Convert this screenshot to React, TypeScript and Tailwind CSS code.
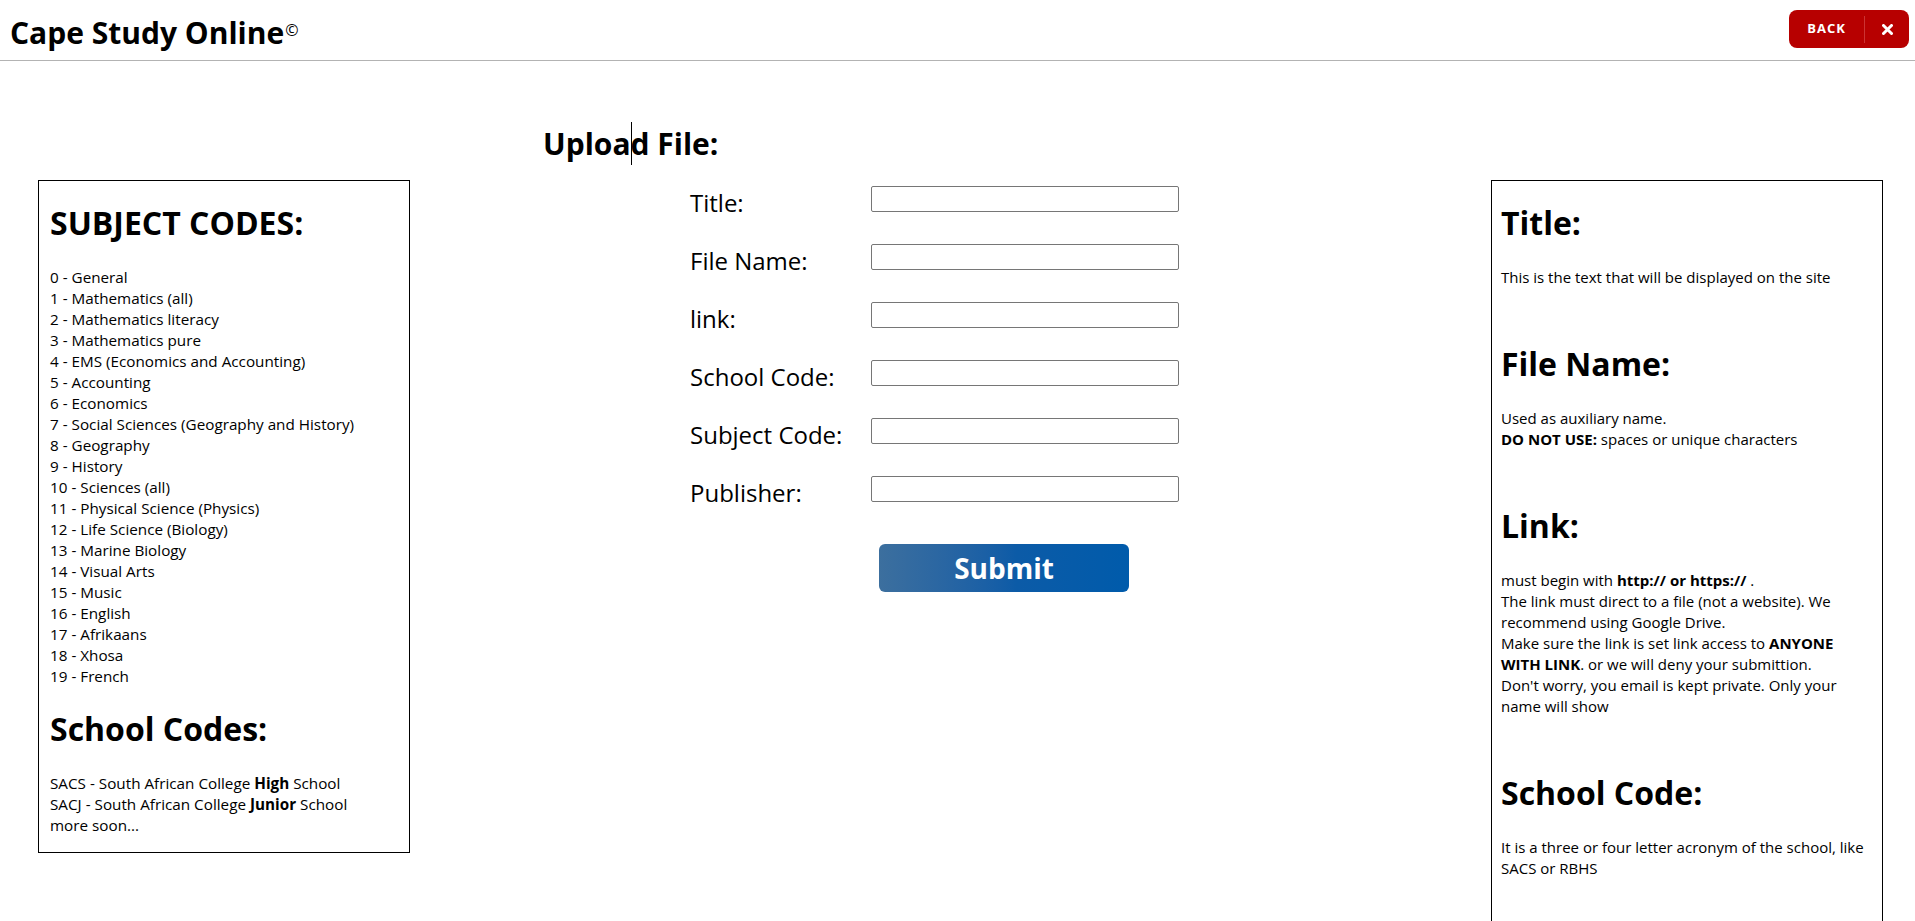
import React from "react";

const subjects = [
  "0 - General",
  "1 - Mathematics (all)",
  "2 - Mathematics literacy",
  "3 - Mathematics pure",
  "4 - EMS (Economics and Accounting)",
  "5 - Accounting",
  "6 - Economics",
  "7 - Social Sciences (Geography and History)",
  "8 - Geography",
  "9 - History",
  "10 - Sciences (all)",
  "11 - Physical Science (Physics)",
  "12 - Life Science (Biology)",
  "13 - Marine Biology",
  "14 - Visual Arts",
  "15 - Music",
  "16 - English",
  "17 - Afrikaans",
  "18 - Xhosa",
  "19 - French",
];

const fields = ["Title:", "File Name:", "link:", "School Code:", "Subject Code:", "Publisher:"];

function Heading({ children, first }: { children: React.ReactNode; first?: boolean }) {
  return (
    <h2 className={`${first ? "mt-[21px]" : "mt-[55px]"} mb-[23px] text-[32px] font-bold leading-[42px]`}>
      {children}
    </h2>
  );
}

export default function App() {
  return (
    <div className="h-screen overflow-hidden bg-white text-black font-['Open_Sans',sans-serif]">
      {/* top bar */}
      <header className="flex h-[61px] items-start justify-between border-b border-[#b3b3b3]">
        <h1 className="pl-[10px] pt-[13px] text-[30px] font-bold leading-[40px] whitespace-nowrap">
          Cape Study Online
          <span className="relative -top-[8px] ml-px text-[16px] font-normal">©</span>
        </h1>
        <div className="mt-[10px] mr-[6px] flex h-[38px] w-[120px] items-center rounded-lg bg-[#b70000] text-white">
          <button className="flex h-full w-[75px] items-center justify-center text-[13px] font-bold tracking-[1px]">
            BACK
          </button>
          <span className="h-[27px] w-px bg-[#cc3333]" />
          <button className="flex h-full flex-1 items-center justify-center">
            <svg width="11" height="11" viewBox="0 0 11 11">
              <path d="M1.5 1.5 L9.5 9.5 M9.5 1.5 L1.5 9.5" stroke="white" strokeWidth="3" strokeLinecap="round" />
            </svg>
          </button>
        </div>
      </header>

      <main className="flex items-start">
        {/* left: codes */}
        <aside className="ml-[38px] mt-[119px] w-[372px] shrink-0 border border-black pl-[11px] pb-[16px]">
          <Heading first>SUBJECT CODES:</Heading>
          <ul className="text-[15.25px] leading-[21px]">
            {subjects.map((s) => (
              <li key={s}>{s}</li>
            ))}
          </ul>
          <h2 className="mt-[21px] mb-[23px] text-[32px] font-bold leading-[42px]">School Codes:</h2>
          <p className="text-[15.25px] leading-[21px]">
            SACS - South African College <b>High</b> School
            <br />
            SACJ - South African College <b>Junior</b> School
            <br />
            more soon...
          </p>
        </aside>

        {/* middle: form */}
        <section className="ml-[133px] mt-[61px] shrink-0">
          <h2 className="text-[30px] font-bold leading-[43px] whitespace-nowrap">
            Uploa
            <span className="-mr-px inline-block h-[43px] w-0 border-l border-black align-top" />
            d File:
          </h2>
          <form className="mt-[21px] ml-[147px]" onSubmit={(e) => e.preventDefault()}>
            <div className="flex flex-col gap-[25px]">
              {fields.map((f) => (
                <div key={f} className="flex items-start">
                  <label className="w-[181px] pt-[1px] text-[24px] leading-[32px] whitespace-nowrap">{f}</label>
                  <input
                    type="text"
                    className="h-[26px] w-[308px] rounded-[2px] border border-[#767676] bg-white px-1 text-[13px]"
                  />
                </div>
              ))}
            </div>
            <button
              type="submit"
              className="mt-[35px] ml-[189px] h-[48px] w-[250px] rounded-md bg-linear-to-r from-[#3c6f9e] via-[#0c5ba7] via-55% to-[#005bab] text-[28px] font-bold leading-[48px] text-white"
            >
              Submit
            </button>
          </form>
        </section>

        {/* right: help */}
        <aside className="mt-[119px] mr-[32px] ml-auto w-[392px] shrink-0 border border-black pl-[9px] pb-[80px] text-[15px] leading-[21px] whitespace-nowrap">
          <Heading first>Title:</Heading>
          <p>This is the text that will be displayed on the site</p>

          <Heading>File Name:</Heading>
          <p>
            Used as auxiliary name.
            <br />
            <b>DO NOT USE:</b> spaces or unique characters
          </p>

          <Heading>Link:</Heading>
          <p>
            must begin with <b>http:// or https://</b> .
            <br />
            The link must direct to a file (not a website). We
            <br />
            recommend using Google Drive.
            <br />
            Make sure the link is set link access to <b>ANYONE</b>
            <br />
            <b>WITH LINK</b>. or we will deny your submittion.
            <br />
            Don't worry, you email is kept private. Only your
            <br />
            name will show
          </p>

          <Heading>School Code:</Heading>
          <p>
            It is a three or four letter acronym of the school, like
            <br />
            SACS or RBHS
          </p>
        </aside>
      </main>
    </div>
  );
}
